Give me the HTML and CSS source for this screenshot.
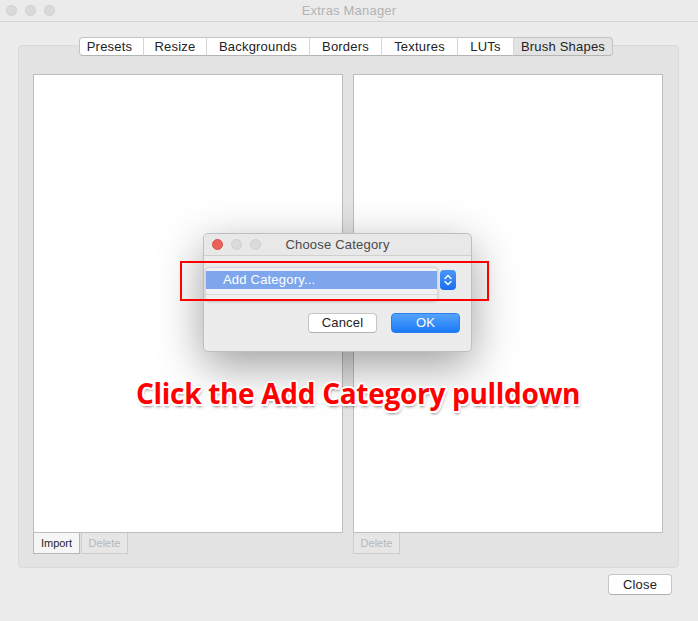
FILE: index.html
```html
<!DOCTYPE html>
<html>
<head>
<meta charset="utf-8">
<link rel="stylesheet" href="styles.css">
</head>
<body>
<div class="window">
  <div class="titlebar">
    <div class="lights">
      <span class="light"></span><span class="light"></span><span class="light"></span>
    </div>
    <div class="title">Extras Manager</div>
  </div>
  <div class="content">
    <div class="tabs">
      <div class="tab t1">Presets</div>
      <div class="tab t2">Resize</div>
      <div class="tab t3">Backgrounds</div>
      <div class="tab t4">Borders</div>
      <div class="tab t5">Textures</div>
      <div class="tab t6">LUTs</div>
      <div class="tab t7 selected">Brush Shapes</div>
    </div>
    <div class="box">
      <div class="cols">
        <div class="col">
          <div class="list"></div>
          <div class="btnrow">
            <div class="sbtn">Import</div>
            <div class="sbtn disabled">Delete</div>
          </div>
        </div>
        <div class="col">
          <div class="list"></div>
          <div class="btnrow">
            <div class="sbtn disabled">Delete</div>
          </div>
        </div>
      </div>
    </div>
  </div>
  <div class="footer">
    <div class="btn">Close</div>
  </div>
</div>

<div class="dialog">
  <div class="dtitlebar">
    <div class="lights">
      <span class="light red"></span><span class="light"></span><span class="light"></span>
    </div>
    <div class="dtitle">Choose Category</div>
  </div>
  <div class="dbody">
    <div class="popuprow">
      <div class="menu">
        <div class="menuitem">Add Category...</div>
        <div class="menusep"></div>
      </div>
      <div class="stepper">
        <svg width="16" height="20" viewBox="0 0 16 20">
          <path d="M5 8.5 L8 5.5 L11 8.5" fill="none" stroke="#fff" stroke-width="1.4" stroke-linecap="round" stroke-linejoin="round"/>
          <path d="M5 11.5 L8 14.5 L11 11.5" fill="none" stroke="#fff" stroke-width="1.4" stroke-linecap="round" stroke-linejoin="round"/>
        </svg>
      </div>
    </div>
    <div class="dbuttons">
      <div class="btn dbtn">Cancel</div>
      <div class="btn dbtn primary">OK</div>
    </div>
  </div>
</div>

<div class="highlight"></div>
<div class="annotation">Click the Add Category pulldown</div>
</body>
</html>
```
FILE: styles.css
```css
html, body {
  margin: 0;
  padding: 0;
}
body {
  width: 698px;
  height: 621px;
  overflow: hidden;
  background: #ececec;
  font-family: "Liberation Sans", Arial, sans-serif;
  color: #222;
  position: relative;
}
.window {
  display: flex;
  flex-direction: column;
  height: 621px;
}
.titlebar {
  height: 21px;
  border-bottom: 1px solid #d3d3d3;
  background: #ebebeb;
  position: relative;
  display: flex;
  align-items: center;
  justify-content: center;
}
.lights {
  position: absolute;
  left: 6px;
  top: 5px;
  display: flex;
  gap: 8px;
}
.light {
  width: 11px;
  height: 11px;
  border-radius: 50%;
  background: #dadada;
  border: 0.5px solid #cfcfcf;
  box-sizing: border-box;
  display: block;
}
.light.red {
  background: #ec6159;
  border-color: #d8514a;
}
.title {
  font-size: 13px;
  color: #b3b3b3;
  letter-spacing: 0.2px;
}
.content {
  padding: 15px 19px 0 18px;
}
.tabs {
  display: flex;
  height: 19px;
  margin-bottom: -11px;
  margin-left: 61px;
  position: relative;
  z-index: 1;
}
.tab {
  height: 19px;
  box-sizing: border-box;
  background: #fff;
  border-top: 1px solid #c4c4c4;
  border-bottom: 1px solid #b4b4b4;
  border-left: 1px solid #d6d6d6;
  font-size: 13px;
  line-height: 17px;
  text-align: center;
  color: #232323;
  letter-spacing: 0.2px;
}
.t1 { width: 64px; border-left: 1px solid #c4c4c4; border-radius: 4px 0 0 4px; padding-right: 4px; }
.t2 { width: 63px; }
.t3 { width: 103px; }
.t4 { width: 72px; }
.t5 { width: 76px; }
.t6 { width: 56px; }
.t7 { width: 100px; border-right: 1px solid #c4c4c4; border-radius: 0 4px 4px 0; }
.tab.selected {
  background: #e3e3e3;
}
.box {
  height: 523px;
  box-sizing: border-box;
  background: #e3e3e3;
  border: 1px solid #dadada;
  border-radius: 4px;
  padding: 28px 15px 0 14px;
}
.cols {
  display: grid;
  grid-template-columns: 310px 310px;
  column-gap: 10px;
}
.list {
  height: 459px;
  box-sizing: border-box;
  background: #fff;
  border: 1px solid #bdbdbd;
}
.btnrow {
  display: flex;
}
.sbtn {
  width: 47px;
  height: 21px;
  box-sizing: border-box;
  border: 1px solid #b7b7b7;
  border-top: none;
  background: #f6f6f6;
  font-size: 11px;
  line-height: 21px;
  text-align: center;
  color: #1f1f1f;
}
.sbtn.disabled {
  background: #e6e6e6;
  border-color: #cdcdcd;
  color: #b7b7b7;
  border-left: 1px solid #cdcdcd;
}
.btnrow .sbtn + .sbtn {
  margin-left: 1px;
}
.footer {
  display: flex;
  justify-content: flex-end;
  padding: 6px 26px 0 0;
}
.btn {
  width: 64px;
  height: 21px;
  box-sizing: border-box;
  background: #fff;
  border: 1px solid #c6c6c6;
  border-bottom-color: #b2b2b2;
  border-radius: 4px;
  font-size: 13px;
  line-height: 19px;
  text-align: center;
  color: #232323;
  letter-spacing: 0.2px;
}

.dialog {
  position: absolute;
  left: 203px;
  top: 233px;
  width: 269px;
  height: 119px;
  box-sizing: border-box;
  background: #ececec;
  border: 1px solid #bfbfbf;
  border-radius: 5px;
  box-shadow: 0 14px 45px rgba(0, 0, 0, 0.38);
  display: flex;
  flex-direction: column;
}
.dtitlebar {
  height: 21px;
  border-bottom: 1px solid #d0d0d0;
  position: relative;
  display: flex;
  align-items: center;
  justify-content: center;
  background: #e8e8e8;
  border-radius: 5px 5px 0 0;
}
.dtitlebar .lights {
  left: 8px;
  top: 5px;
}
.dtitle {
  font-size: 13px;
  color: #4a4a4a;
  letter-spacing: 0.2px;
}
.dbody {
  padding: 11px 11px 0 1px;
  display: flex;
  flex-direction: column;
}
.popuprow {
  display: flex;
  align-items: flex-start;
  height: 34px;
}
.menu {
  width: 233px;
  height: 34px;
  box-sizing: border-box;
  background: #f1f1f1;
  border: 1px solid #d6d6d6;
  border-radius: 4px;
  box-shadow: 0 1px 3px rgba(0, 0, 0, 0.18);
  padding-top: 3px;
  display: flex;
  flex-direction: column;
}
.menuitem {
  height: 18px;
  background: #7ea6ec;
  color: #fff;
  font-size: 13px;
  line-height: 18px;
  padding-left: 17px;
  letter-spacing: 0.2px;
}
.menusep {
  margin-top: 5px;
  height: 1px;
  background: #d8d8d8;
}
.stepper {
  margin-left: 2px;
  margin-top: 3px;
  width: 16px;
  height: 20px;
  border-radius: 4px;
  background: linear-gradient(#4a97f8, #1b6ff0);
  display: flex;
}
.dbuttons {
  display: flex;
  justify-content: flex-end;
  gap: 14px;
  margin-top: 12px;
}
.dbtn {
  width: 69px;
  height: 20px;
  line-height: 18px;
}
.dbtn.primary {
  background: linear-gradient(#55a3fb, #1a7af6);
  border-color: #2a7ef2;
  color: #fff;
}

.highlight {
  position: absolute;
  left: 180px;
  top: 261px;
  width: 309px;
  height: 40px;
  box-sizing: border-box;
  border: 2px solid #ff0000;
}
.annotation {
  position: absolute;
  left: 136px;
  top: 374px;
  font-family: "Open Sans", "Noto Sans", sans-serif;
  font-weight: 700;
  font-size: 28px;
  line-height: 38px;
  color: #ff0000;
  letter-spacing: -0.3px;
  text-shadow:
    -1.5px -1.5px 0 #fff, 1.5px -1.5px 0 #fff, -1.5px 1.5px 0 #fff, 1.5px 1.5px 0 #fff,
    0 -2px 0 #fff, 0 2px 0 #fff, -2px 0 0 #fff, 2px 0 0 #fff,
    1px 3px 3px rgba(0, 0, 0, 0.45);
}
```
